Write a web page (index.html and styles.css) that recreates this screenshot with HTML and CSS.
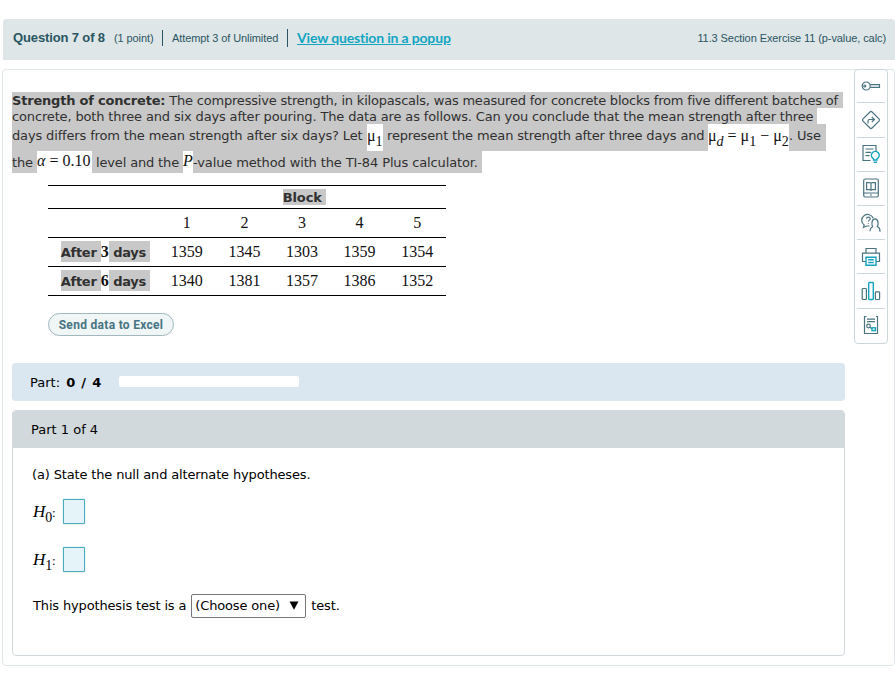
FILE: index.html
```
<!DOCTYPE html>
<html lang="en">
<head>
    <meta charset="UTF-8">
    <meta name="viewport" content="width=device-width, initial-scale=1.0">
    <title>11.3 Section Exercise 11 (p-value, calc)</title>
    <link rel="stylesheet" href="styles.css">
</head>
<body>
    <header class="question-bar">
        <span class="question-no">Question 7 of 8</span>
        <span class="points">(1 point)</span>
        <span class="attempt">Attempt 3 of Unlimited</span>
        <a class="popup-link" href="#">View question in a popup</a>
        <span class="section-name">11.3 Section Exercise 11 (p-value, calc)</span>
    </header>

    <div class="frame">
        <main class="content">
            <div class="prompt">
                <div class="line line-1"><span class="sel"><b>Strength of concrete:</b> The compressive strength, in kilopascals, was measured for concrete blocks from five different batches of </span></div>
                <div class="line line-2"><span class="sel">concrete, both three and six days after pouring. The data are as follows. Can you conclude that the mean strength after three </span></div>
                <div class="line line-3"><span class="sel seg-a">days differs from the mean strength after six days? Let </span><span class="math mu-one">μ<sub>1</sub></span><span class="sel seg-b"> represent the mean strength after three days and </span><span class="math mu-diff">μ<sub><i>d</i></sub><span class="op">=</span>μ<sub>1</sub><span class="op minus">−</span>μ<sub>2</sub></span><span class="sel seg-c">. Use </span></div>
                <div class="line line-4"><span class="sel seg-d">the </span><span class="math alpha"><i>α</i><span class="op">=</span>0.10</span><span class="sel seg-e"> level and the </span><span class="math p-var"><i>P</i></span><span class="sel seg-f">-value method with the TI-84 Plus calculator. </span></div>
            </div>

            <table class="data">
                <tr class="head"><th></th><th class="block" colspan="5"><span class="mark">Block </span></th></tr>
                <tr><th></th><td>1</td><td>2</td><td>3</td><td>4</td><td>5</td></tr>
                <tr><th><span class="mark">After </span><span class="num">3</span><span class="mark"> days </span></th><td>1359</td><td>1345</td><td>1303</td><td>1359</td><td>1354</td></tr>
                <tr><th><span class="mark">After </span><span class="num">6</span><span class="mark"> days </span></th><td>1340</td><td>1381</td><td>1357</td><td>1386</td><td>1352</td></tr>
            </table>

            <button class="excel-btn">Send data to Excel</button>

            <div class="progress">
                <span>Part: <b>0 / 4</b></span>
                <div class="progress-track"></div>
            </div>

            <section class="part">
                <div class="part-title">Part 1 of 4</div>
                <div class="part-body">
                    <p class="task">(a) State the null and alternate hypotheses.</p>
                    <div class="hypothesis"><span class="h-label"><i>H</i><sub>0</sub><span class="colon">:</span></span><span class="h-input"></span></div>
                    <div class="hypothesis"><span class="h-label"><i>H</i><sub>1</sub><span class="colon">:</span></span><span class="h-input"></span></div>
                    <div class="test-type">
                        <span>This hypothesis test is a</span>
                        <span class="choose">(Choose one)<svg width="10" height="9" viewBox="0 0 10 9"><path d="M0.5 0.5h9L5 8.8z"/></svg></span>
                        <span>test.</span>
                    </div>
                </div>
            </section>
        </main>

        <aside class="tools">
            <!-- answer key -->
            <div class="tool"><svg viewBox="0 0 20 20"><circle cx="5.2" cy="10" r="4"/><circle cx="3.8" cy="10" r="1"/><path d="M9.2 8.7H18.5v2.6H9.2"/></svg></div>
            <!-- guided solution -->
            <div class="tool"><svg viewBox="0 0 20 20"><rect x="3.6" y="3.6" width="12.8" height="12.8" rx="1.5" transform="rotate(45 10 10)"/><path d="M7 13.5v-2.3c0-1 .5-1.7 1.5-1.7H13M10.8 7l2.6 2.5-2.6 2.5"/></svg></div>
            <!-- hint -->
            <div class="tool"><svg viewBox="0 0 20 20"><path d="M9.5 16.5H2v-15h13V8M4.5 5h8M4.5 8.3H10M4.5 11.6h4"/><path class="accent" d="M12.5 16v-1.3a3.9 3.9 0 1 1 3.6 0V16zM12.7 18.2h3.2"/></svg></div>
            <!-- ebook -->
            <div class="tool"><svg viewBox="0 0 20 20"><rect x="2.7" y="1" width="14.6" height="18" rx="1.5"/><path d="M3 15h14M10 5.2v7M10 5.3L8.8 4.6H5.6v7h3.2L10 12.3l1.2-.7h3.2v-7h-3.2zM9 17h2"/></svg></div>
            <!-- ask instructor -->
            <div class="tool"><svg viewBox="0 0 20 20"><path d="M12.3 5.2A6 5.8 0 1 0 3.2 12L2.5 14.5 5.6 13H8.5"/><path d="M5.5 5.8c0-2.3 3.7-2.3 3.7-.1 0 1.4-1.8 1.4-1.8 2.8M7.4 10v.8"/><path d="M11.8 13.5c-1.3-1.5-1.6-7.7 2.2-7.7s3.5 6.2 2.2 7.7l1.4 1c.9.4 1.4 1.5 1.4 4.3M11.8 13.5l-1.8 1.4c-.7.5-1 1.4-1 3.4"/></svg></div>
            <!-- print -->
            <div class="tool"><svg viewBox="0 0 20 20"><path d="M5 5.8V1.5h10v4.3M5 14.5H1.5V6.2h17v8.3H15"/><path class="accent" d="M5 10.2h10v8H5zM7.2 12.8h5.6M7.2 15.5h5.6"/></svg></div>
            <!-- statistics -->
            <div class="tool"><svg viewBox="0 0 20 20"><rect x="1.2" y="7.5" width="4.2" height="11" rx=".7"/><rect class="accent" x="7.7" y="1.5" width="4.6" height="17" rx=".7"/><rect x="14.4" y="10.8" width="4.2" height="7.7" rx=".7"/></svg></div>
            <!-- data sheet -->
            <div class="tool"><svg viewBox="0 0 20 20"><path d="M5.5 1.5H3.5v17h13v-17H15M6 4.2h8M6 6.7h8"/><circle cx="7.5" cy="11" r="1.8"/><path d="M9.2 12.3l1.6 1.4"/><rect class="accent" x="11" y="12.8" width="3.4" height="2.8"/></svg></div>
        </aside>
    </div>
</body>
</html>
```
FILE: styles.css
```
* {
    margin: 0;
    padding: 0;
    box-sizing: border-box;
}

body {
    font-family: Verdana, 'DejaVu Sans', sans-serif;
    font-size: 13px;
    color: #000;
    background: #fff;
    padding: 19px 0 0 2px;
    overflow: hidden;
}

.question-bar {
    display: flex;
    align-items: center;
    height: 41px;
    margin-left: 1px;
    padding: 0 9px 3px 10px;
    background: #dfe6e7;
    border-radius: 4px 4px 0 0;
    font-family: Arial, 'Liberation Sans', sans-serif;
    font-size: 11px;
    letter-spacing: -0.09px;
    color: #285562;
    white-space: nowrap;
}

.question-no {
    width: 101px;
    padding-bottom: 1px;
    font-size: 13px;
    font-weight: bold;
    letter-spacing: -0.13px;
}

.points {
    width: 49px;
    border-right: 1px solid #285562;
    height: 16px;
    line-height: 16px;
}

.attempt {
    width: 125px;
    padding-left: 9px;
    border-right: 1px solid #285562;
    height: 18px;
    line-height: 19px;
}

.popup-link {
    margin-left: 9px;
    padding-bottom: 2px;
    font-family: Lato, sans-serif;
    font-size: 14px;
    font-weight: bold;
    letter-spacing: -0.17px;
    color: #12a5c2;
}

.section-name {
    margin-left: auto;
}

.frame {
    display: flex;
    gap: 9px;
    height: 597px;
    margin-top: 9px;
    padding-left: 9px;
    border: 1px solid #dfe6e7;
    border-radius: 4px;
}

.content {
    flex: none;
    width: 833px;
    padding-top: 22px;
}

.prompt {
    color: #303030;
    letter-spacing: -0.15px;
}

.line {
    display: flex;
    width: max-content;
    white-space: pre;
    height: 16px;
    line-height: 17px;
}

.sel,
.mark {
    background: #c8c8c8;
}

.line-1 .sel {
    width: 831px;
    letter-spacing: -0.2px;
}

.line-2 .sel {
    width: 805px;
}

.line-3 {
    height: 27px;
    line-height: 23px;
}

.line-4 {
    height: 22px;
    line-height: 23px;
}

.seg-a {
    width: 355px;
}

.seg-b {
    width: 325px;
}

.seg-c {
    width: 37px;
}

.seg-d {
    width: 25px;
}

.seg-e {
    width: 91px;
}

.seg-f {
    width: 289px;
    letter-spacing: -0.12px;
}

.math {
    font-family: 'Times New Roman', 'Liberation Serif', serif;
    font-size: 16px;
    letter-spacing: 0;
    color: #111;
}

.line-4 .math {
    line-height: 20px;
}

.mu-one {
    width: 16px;
}

.mu-diff {
    width: 81px;
}

.alpha {
    width: 55px;
}

.p-var {
    width: 10px;
}

.math sub,
.h-label sub {
    font-size: 14px;
    line-height: 0;
    vertical-align: -5px;
}

.op {
    margin: 0 4px;
}

.data {
    width: 398px;
    margin: 12px 0 0 36px;
    table-layout: fixed;
    border-collapse: collapse;
    color: #303030;
}

.data tr {
    height: 29px;
    border-top: 1px solid #000;
    border-bottom: 1px solid #000;
}

.data tr.head {
    height: 23px;
}

.data th {
    width: 110px;
    padding: 0 0 2px 5px;
    letter-spacing: -0.25px;
    white-space: pre;
}

.data .block {
    width: auto;
    padding-bottom: 0;
    letter-spacing: -0.1px;
}

.data td,
.num {
    font-family: 'Times New Roman', 'Liberation Serif', serif;
    font-size: 16px;
    letter-spacing: 0;
    text-align: center;
    color: #111;
}

.mark {
    display: inline-block;
    height: 16px;
    line-height: 17px;
}

.data tr:not(.head) .mark {
    height: 21px;
    line-height: 23px;
}

.excel-btn {
    display: block;
    width: 126px;
    height: 23px;
    margin: 17px 0 0 36px;
    border: 1px solid #9fb7bd;
    border-radius: 12px;
    background: #f0f5f6;
    font-family: Roboto, sans-serif;
    font-size: 12px;
    font-weight: bold;
    letter-spacing: 0.3px;
    color: #467482;
}

.progress {
    display: flex;
    align-items: center;
    gap: 17px;
    height: 38px;
    margin-top: 27px;
    padding-left: 18px;
    background: #dae6f0;
    border-radius: 4px;
}

.progress b {
    margin-left: 2px;
    letter-spacing: 0.3px;
    word-spacing: 1px;
}

.progress-track {
    width: 180px;
    height: 11px;
    margin-top: -1px;
    background: #fff;
    border-radius: 2px;
}

.part {
    height: 246px;
    margin-top: 9px;
    border: 1px solid #d1d9dc;
    border-radius: 4px;
    overflow: hidden;
}

.part-title {
    height: 37px;
    padding-left: 18px;
    line-height: 37px;
    background: #d1d9dc;
}

.part-body {
    padding: 19px 0 0 19px;
    letter-spacing: -0.15px;
}

.task {
    line-height: 16px;
    margin-bottom: 16px;
}

.hypothesis {
    display: flex;
    height: 25px;
    margin-bottom: 23px;
}

.h-label {
    width: 31px;
    padding-left: 1px;
    font-family: 'Times New Roman', 'Liberation Serif', serif;
    font-size: 17px;
    line-height: 25px;
}

.colon {
    font-size: 13px;
}

.h-input {
    width: 22px;
    height: 25px;
    border: 1px solid #4ba9b9;
    border-radius: 1px;
    background: #e5f4f9;
    box-shadow: 0 0 1px #4ba9b9;
}

.test-type {
    display: flex;
    align-items: center;
    margin: -1px 0 0 1px;
    line-height: 15px;
}

.choose {
    display: flex;
    align-items: center;
    justify-content: space-between;
    width: 115px;
    height: 24px;
    margin: 0 5px 0 5px;
    padding: 0 6px 2px 3px;
    border: 1px solid #767676;
    border-radius: 2px;
}

.test-type > span:not(.choose) {
    padding-bottom: 2px;
}

.tools {
    flex: none;
    width: 34px;
    height: 275px;
    margin-top: -1px;
    padding: 0 2px;
    border: 1px solid #cbd7da;
    border-radius: 4px;
}

.tool {
    display: flex;
    align-items: center;
    justify-content: center;
    height: 34.2px;
}

.tool:first-child {
    height: 32.4px;
}

.tool + .tool {
    border-top: 1px solid #cbd7da;
}

.tool svg {
    width: 20px;
    height: 20px;
    fill: none;
    stroke: #4a7380;
    stroke-width: 1.2;
}

.tool .accent {
    stroke: #13a3bc;
    stroke-width: 1.4;
}
```
